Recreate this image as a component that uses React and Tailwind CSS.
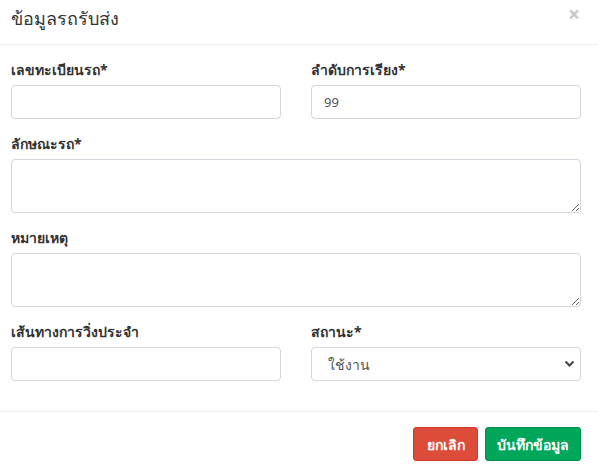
import React from 'react';

const Label = ({ children }) => (
  <label className="block h-5 leading-5 mb-[5px] text-[14px] font-bold text-[#333]">{children}</label>
);

const inputCls =
  'block w-full h-[34px] px-3 text-[13px] text-[#555] bg-white border border-[#d2d6de] rounded-[4px] outline-none';

const App = () => {
  return (
    <div className="w-[598px] h-[472px] bg-white overflow-hidden" style={{ fontFamily: 'Tahoma, "Noto Sans", "Liberation Sans", sans-serif' }}>
      {/* header */}
      <div className="h-[45px] flex items-center justify-between pl-[11px] pr-[17px] border-b border-[#f0f0f0]">
        <h4 className="text-[18px] text-[#333] leading-none -mt-[9px]">ข้อมูลรถรับส่ง</h4>
        <button className="text-[21px] font-bold leading-none text-[#c8c8c8] -mt-[16px] mr-[1px]">×</button>
      </div>

      {/* body */}
      <div className="pt-[15px] pb-[15px] pl-[11px] pr-[17px]">
        <div className="grid grid-cols-2 gap-x-[30px]">
          <div className="mb-[15px]">
            <Label>เลขทะเบียนรถ*</Label>
            <input className={inputCls} />
          </div>
          <div className="mb-[15px]">
            <Label>ลำดับการเรียง*</Label>
            <input className={inputCls} defaultValue="99" />
          </div>
        </div>

        <div className="mb-[15px]">
          <Label>ลักษณะรถ*</Label>
          <textarea className="block w-full h-[54px] px-3 py-1.5 text-[13px] text-[#555] border border-[#d2d6de] rounded-[4px] outline-none" />
        </div>

        <div className="mb-[15px]">
          <Label>หมายเหตุ</Label>
          <textarea className="block w-full h-[54px] px-3 py-1.5 text-[13px] text-[#555] border border-[#d2d6de] rounded-[4px] outline-none" />
        </div>

        <div className="grid grid-cols-2 gap-x-[30px]">
          <div className="mb-[15px]">
            <Label>เส้นทางการวิ่งประจำ</Label>
            <input className={inputCls} />
          </div>
          <div className="mb-[15px]">
            <Label>สถานะ*</Label>
            <div className="relative">
              <select className={inputCls + ' appearance-none pl-4 text-[14px]'} defaultValue="1">
                <option value="1">ใช้งาน</option>
                <option value="0">ไม่ใช้งาน</option>
              </select>
              <svg className="absolute right-[6px] top-[13px] w-[11px] h-[8px] pointer-events-none" viewBox="0 0 11 8" fill="none">
                <path d="M1.5 1.5 L5.5 5.5 L9.5 1.5" stroke="#444" strokeWidth="2" />
              </svg>
            </div>
          </div>
        </div>
      </div>

      {/* footer */}
      <div className="border-t border-[#f0f0f0] pt-[15px] pl-[11px] pr-[17px] flex justify-end gap-[7px]">
        <button className="h-[34px] w-[65px] rounded-[3px] bg-[#dd4b39] border border-[#d73925] text-white text-[14px] font-bold">ยกเลิก</button>
        <button className="h-[34px] w-[96px] rounded-[3px] bg-[#00a65a] border border-[#008d4c] text-white text-[14px] font-bold">บันทึกข้อมูล</button>
      </div>
    </div>
  );
};

export default App;
